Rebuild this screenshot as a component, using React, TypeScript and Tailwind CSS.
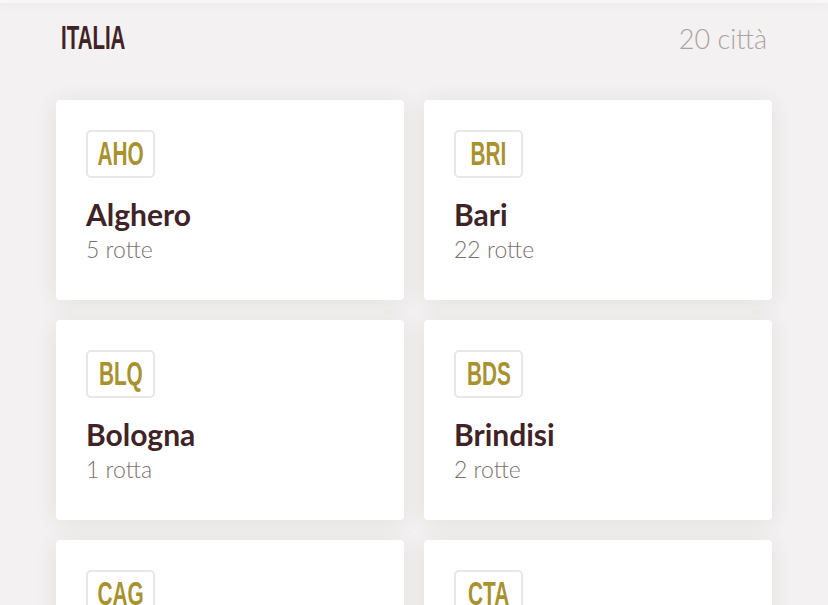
import React from 'react';

type City = { code: string; name: string; routes: number };

const cities: City[] = [
  { code: 'AHO', name: 'Alghero', routes: 5 },
  { code: 'BRI', name: 'Bari', routes: 22 },
  { code: 'BLQ', name: 'Bologna', routes: 1 },
  { code: 'BDS', name: 'Brindisi', routes: 2 },
  { code: 'CAG', name: 'Cagliari', routes: 9 },
  { code: 'CTA', name: 'Catania', routes: 14 },
];

function CityCard({ city }: { city: City }) {
  return (
    <div className="h-[200px] rounded-[4px] bg-white p-[30px] shadow-[0_2px_22px_rgba(70,40,40,0.09)]">
      <div className="flex h-[48px] w-[69px] items-center justify-center overflow-hidden rounded-[5px] border-2 border-[#e9e6e6]">
        <span className="inline-block scale-x-[0.63] font-['Liberation_Sans',sans-serif] text-[33px] font-bold leading-none text-[#a8922f]">
          {city.code}
        </span>
      </div>
      <div className="mt-[19px] font-['Lato',sans-serif] text-[30px] font-bold leading-[34px] text-[#3f2326]">
        {city.name}
      </div>
      <div className="mt-[4px] font-['Lato',sans-serif] text-[23px] font-light leading-[28px] text-[#7e6f6f]">
        {city.routes} {city.routes === 1 ? 'rotta' : 'rotte'}
      </div>
    </div>
  );
}

export default function App() {
  return (
    <div className="min-h-screen bg-[#f3f1f1]">
      <div className="relative z-10 h-[3px] bg-[#f8f7f7] shadow-[0_2px_12px_rgba(60,30,30,0.07)]" />
      <div className="px-[56px] pt-[15px] pb-10">
        <div className="flex items-baseline justify-between px-[5px]">
          <h1 className="inline-block origin-left scale-x-[0.62] font-['Liberation_Sans',sans-serif] text-[33px] font-bold leading-[40px] text-[#3f2326]">
            ITALIA
          </h1>
          <span className="font-['Lato',sans-serif] text-[27px] font-light text-[#ada2a2]">20 città</span>
        </div>
        <div className="mt-[40px] grid grid-cols-2 gap-[20px]">
          {cities.map((c) => (
            <CityCard key={c.code} city={c} />
          ))}
        </div>
      </div>
    </div>
  );
}
